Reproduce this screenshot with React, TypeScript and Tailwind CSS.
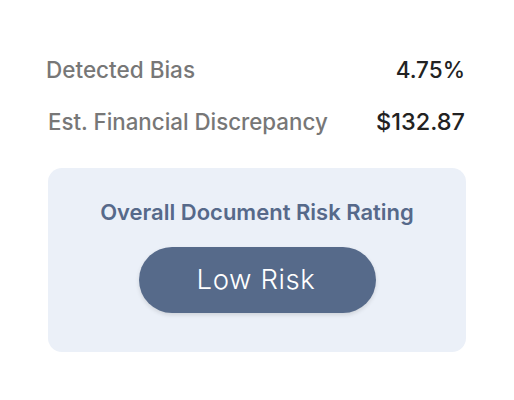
import React from "react";

export default function App() {
  return (
    <div className="w-[514px] h-[400px] bg-white" style={{ fontFamily: "Inter, 'Noto Sans', sans-serif" }}>
      <div className="pl-[46px] pr-[49px] pt-[56px]">
        <div className="flex items-center justify-between h-[28px]">
          <span className="text-[22.5px] font-medium text-[#777777]">Detected Bias</span>
          <span className="text-[22.5px] font-medium text-[#222222]">4.75%</span>
        </div>
        <div className="flex items-center justify-between h-[28px] mt-[24px] pl-[2px]">
          <span className="text-[22.3px] font-medium text-[#777777]">Est. Financial Discrepancy</span>
          <span className="text-[23.5px] font-medium text-[#222222]">$132.87</span>
        </div>
      </div>
      <div className="ml-[48px] mt-[32px] w-[418px] h-[184px] rounded-[14px] bg-[#ebf0f8] flex flex-col items-center pt-[30px]">
        <div className="text-[22px] font-semibold text-[#56698a] leading-[28px]">Overall Document Risk Rating</div>
        <div className="mt-[21px] w-[237px] h-[66px] rounded-full bg-[#566a8a] shadow-[0_2px_4px_rgba(0,0,0,0.12)] flex items-center justify-center">
          <span className="text-[27.5px] font-light text-white tracking-[0.6px] pr-[2px]">Low Risk</span>
        </div>
      </div>
    </div>
  );
}
